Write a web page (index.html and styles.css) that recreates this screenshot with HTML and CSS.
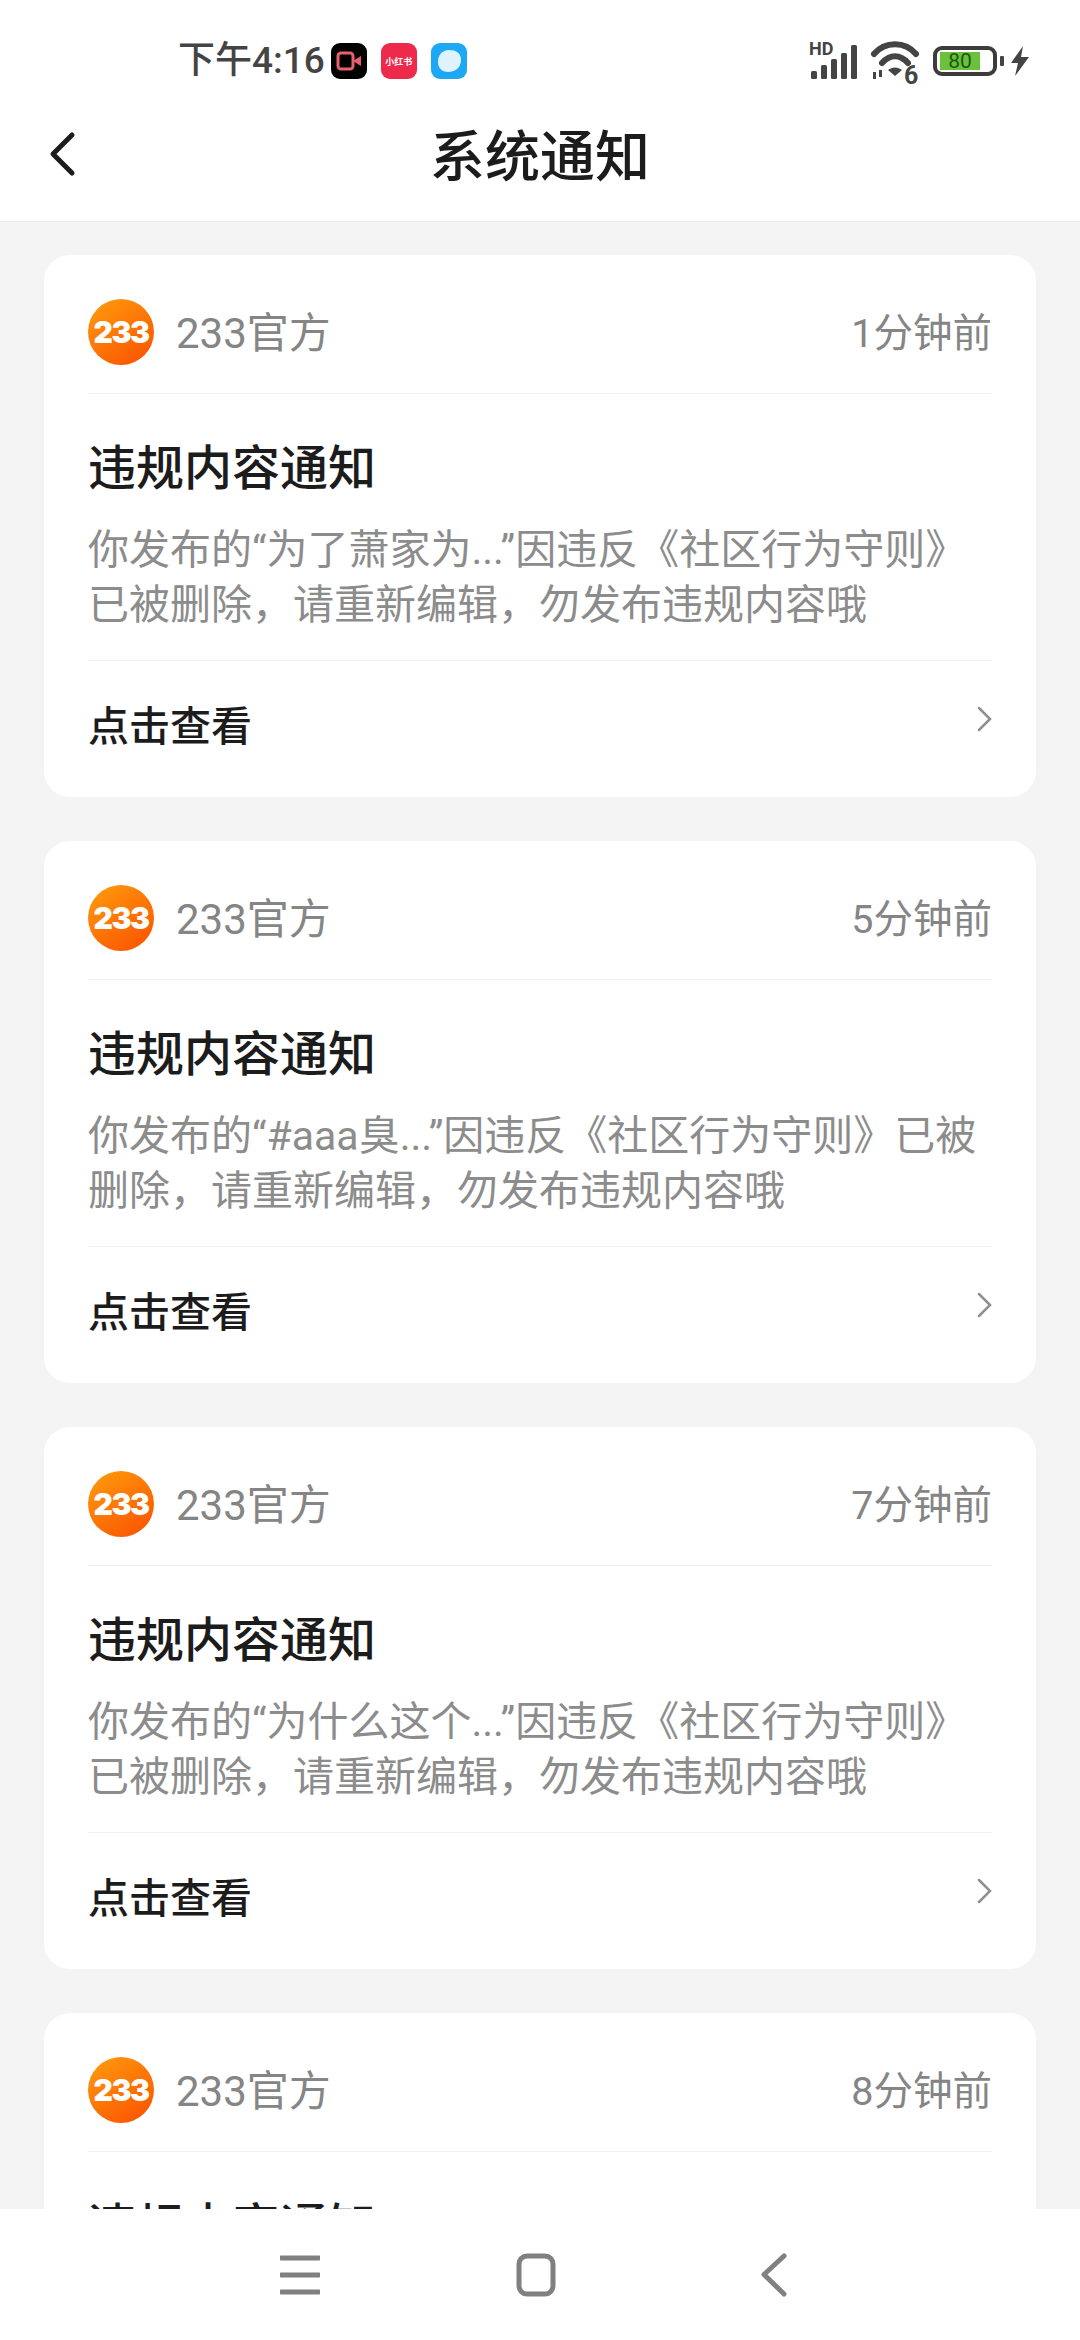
FILE: index.html
```html
<!DOCTYPE html>
<html lang="zh-CN">
<head>
<meta charset="utf-8">
<title>系统通知</title>
<link rel="stylesheet" href="styles.css">
</head>
<body>
<div class="page">
  <header class="top">
    <div class="status">
      <div class="status-left">
        <span class="clock">下午4:16</span>
        <span class="app app-video"><svg viewBox="0 0 34 34" width="34" height="34"><rect x="6" y="9" width="15" height="16" rx="3" fill="none" stroke="#e8606e" stroke-width="3"/><path d="M21 17l8-5v10z" fill="#e8606e"/></svg></span>
        <span class="app app-red">小红书</span>
        <span class="app app-blue"><svg viewBox="0 0 34 34" width="34" height="34"><path d="M17 6c7 0 12 3 12 10 0 8-6 12-13 12-6 0-10-4-10-10C6 11 10 6 17 6z" fill="#dff3fe"/></svg></span>
      </div>
      <div class="status-right">
        <svg class="sig" viewBox="0 0 50 44" width="50" height="44">
          <text x="0" y="16" class="hd">HD</text>
          <rect x="2" y="32" width="6" height="8" rx="1.500" fill="#444"/>
          <rect x="12" y="26" width="6" height="14" rx="1.500" fill="#444"/>
          <rect x="22" y="20" width="6" height="20" rx="1.500" fill="#444"/>
          <rect x="32" y="14" width="6" height="26" rx="1.500" fill="#444"/>
          <rect x="42" y="6" width="6" height="34" rx="1.500" fill="#444"/>
        </svg>
        <svg class="wifi" viewBox="0 0 48 44" width="48" height="44">
          <path d="M3 15C14 2 34 2 45 15" fill="none" stroke="#444" stroke-width="6" stroke-linecap="round"/>
          <path d="M11 24C19 15 29 15 37 24" fill="none" stroke="#444" stroke-width="6" stroke-linecap="round"/>
          <path d="M17 31c4-3.500 10-3.500 14 0l-7 6z" fill="#444"/>
          <path d="M2 33h3v7H2zM8 31h3v7H8z" fill="#444"/>
          <text x="33" y="45" class="six">6</text>
        </svg>
        <span class="battery"><span class="level">80</span></span>
        <span class="batt-cap"></span>
        <svg class="bolt" viewBox="0 0 20 32" width="20" height="32"><path d="M13 1L1 18h7L5 31l14-19h-8z" fill="#444"/></svg>
      </div>
    </div>
    <div class="titlebar">
      <svg class="back" viewBox="0 0 30 48" width="30" height="48"><path d="M24 4L5 23l19 19" fill="none" stroke="#1c1c1c" stroke-width="5" stroke-linecap="round" stroke-linejoin="round"/></svg>
      <h1 class="title">系统通知</h1>
    </div>
  </header>

  <main class="list">
    <article class="card">
      <div class="head">
        <span class="logo">233</span><span class="sender">233官方</span><span class="time">1分钟前</span>
      </div>
      <div class="body">
        <h2 class="subject">违规内容通知</h2>
        <p class="msg">你发布的“为了萧家为...”因违反《社区行为守则》已被删除，请重新编辑，勿发布违规内容哦</p>
      </div>
      <div class="foot">
        <span class="link">点击查看</span>
        <svg class="chev" viewBox="0 0 16 26" width="16" height="26"><path d="M3 2l11 11L3 24" fill="none" stroke="#8f8f8f" stroke-width="2.500" stroke-linecap="round"/></svg>
      </div>
    </article>
    <article class="card">
      <div class="head">
        <span class="logo">233</span><span class="sender">233官方</span><span class="time">5分钟前</span>
      </div>
      <div class="body">
        <h2 class="subject">违规内容通知</h2>
        <p class="msg">你发布的“#aaa臭...”因违反《社区行为守则》已被删除，请重新编辑，勿发布违规内容哦</p>
      </div>
      <div class="foot">
        <span class="link">点击查看</span>
        <svg class="chev" viewBox="0 0 16 26" width="16" height="26"><path d="M3 2l11 11L3 24" fill="none" stroke="#8f8f8f" stroke-width="2.500" stroke-linecap="round"/></svg>
      </div>
    </article>
    <article class="card">
      <div class="head">
        <span class="logo">233</span><span class="sender">233官方</span><span class="time">7分钟前</span>
      </div>
      <div class="body">
        <h2 class="subject">违规内容通知</h2>
        <p class="msg">你发布的“为什么这个...”因违反《社区行为守则》已被删除，请重新编辑，勿发布违规内容哦</p>
      </div>
      <div class="foot">
        <span class="link">点击查看</span>
        <svg class="chev" viewBox="0 0 16 26" width="16" height="26"><path d="M3 2l11 11L3 24" fill="none" stroke="#8f8f8f" stroke-width="2.500" stroke-linecap="round"/></svg>
      </div>
    </article>
    <article class="card">
      <div class="head">
        <span class="logo">233</span><span class="sender">233官方</span><span class="time">8分钟前</span>
      </div>
      <div class="body">
        <h2 class="subject">违规内容通知</h2>
      </div>
    </article>
  </main>

  <nav class="navbar">
    <svg viewBox="0 0 40 40" width="40" height="40"><path d="M1 3h38M1 20h38M1 37h38" fill="none" stroke="#808080" stroke-width="5" stroke-linecap="round"/></svg>
    <svg viewBox="0 0 40 44" width="40" height="44"><rect x="3" y="3" width="34" height="38" rx="8" fill="none" stroke="#808080" stroke-width="5"/></svg>
    <svg class="nav-back" viewBox="0 0 28 44" width="28" height="44"><path d="M24 3L4 21.500 24 41" fill="none" stroke="#808080" stroke-width="5" stroke-linecap="round" stroke-linejoin="round"/></svg>
  </nav>
</div>
</body>
</html>
```
FILE: styles.css
```css
* { box-sizing: border-box; }
html, body { margin: 0; padding: 0; }
body {
  font-family: "Noto Sans CJK SC", "Noto Sans", sans-serif;
  background: #f4f4f4;
}
.page {
  width: 1080px;
  height: 2340px;
  display: flex;
  flex-direction: column;
  overflow: hidden;
}
.top {
  flex: none;
  height: 222px;
  background: #fff;
  border-bottom: 1px solid #ececec;
}
.status {
  height: 92px;
  padding: 30px 50px 0 178px;
  display: flex;
  justify-content: space-between;
  align-items: center;
}
.status-left { display: flex; align-items: center; }
.clock {
  font-family: Roboto, "Noto Sans CJK SC", sans-serif;
  font-size: 37px;
  font-weight: 500;
  color: #444;
  margin-right: 6px;
  line-height: 44px;
}
.app {
  width: 36px;
  height: 36px;
  border-radius: 9px;
  margin-right: 14px;
  display: flex;
  align-items: center;
  justify-content: center;
  overflow: hidden;
}
.app-video { background: #000; }
.app-red {
  background: #ee2a4c;
  color: #fff;
  font-size: 9px;
  font-weight: 700;
  white-space: nowrap;
}
.app-blue { background: #1ea7f5; margin-right: 0; }
.status-right { display: flex; align-items: center; }
.sig { margin-right: 12px; overflow: visible; }
.hd { font: 700 18px Roboto, sans-serif; fill: #444; }
.six { font: 700 25px Roboto, sans-serif; fill: #444; }
.wifi { margin-right: 14px; overflow: visible; }
.battery {
  width: 64px;
  height: 30px;
  border: 4px solid #3c3c3c;
  border-radius: 9px;
  padding: 2px 3px;
  display: flex;
}
.level {
  width: 40px;
  background: #6cc13c;
  color: #1a5a10;
  font: 400 21px/18px Roboto, sans-serif;
  text-align: center;
}
.batt-cap {
  width: 4px;
  height: 10px;
  margin: 0 6px 0 3px;
  background: #444;
  border-radius: 1px;
}
.titlebar {
  height: 129px;
  padding: 0 0 4px 48px;
  display: flex;
  align-items: center;
  position: relative;
}
.back { flex: none; }
.title {
  position: absolute;
  left: 0;
  right: 0;
  top: 0;
  margin: 0;
  height: 121px;
  line-height: 121px;
  text-align: center;
  font-size: 55px;
  font-weight: 500;
  color: #1c1c1c;
}
.list {
  flex: 1;
  min-height: 0;
  overflow: hidden;
  padding: 33px 44px 0;
  display: flex;
  flex-direction: column;
  gap: 44px;
}
.card {
  flex: none;
  height: 542px;
  background: #fff;
  border-radius: 26px;
  padding: 0 44px;
}
.head {
  height: 139px;
  padding-top: 15px;
  border-bottom: 1px solid #f0f0f0;
  display: flex;
  align-items: center;
}
.logo {
  width: 66px;
  height: 66px;
  border-radius: 50%;
  background: linear-gradient(145deg, #ff9a0c 5%, #fb5a02 85%);
  color: #fff;
  font: 900 30px/66px Inter, Roboto, sans-serif;
  letter-spacing: -1.500px;
  text-align: center;
  flex: none;
  margin-right: 22px;
}
.sender {
  flex: 1;
  padding-bottom: 4px;
  font-family: Roboto, "Noto Sans CJK SC", sans-serif;
  font-size: 42px;
  color: #858585;
}
.time {
  padding-bottom: 4px;
  font-family: Roboto, "Noto Sans CJK SC", sans-serif;
  font-size: 39.500px;
  color: #858585;
}
.body {
  height: 267px;
  padding-top: 40px;
  border-bottom: 1px solid #f0f0f0;
}
.subject {
  margin: 0;
  font-size: 48px;
  line-height: 60px;
  font-weight: 500;
  color: #1c1c1c;
}
.msg {
  margin: 29px 0 0;
  font-family: Roboto, "Noto Sans CJK SC", sans-serif;
  font-size: 41px;
  line-height: 55px;
  color: #8c8c8c;
}
.foot {
  height: 123px;
  display: flex;
  align-items: center;
  justify-content: space-between;
}
.link {
  font-size: 41px;
  font-weight: 500;
  color: #1c1c1c;
}
.chev { flex: none; margin-top: -8px; }
.navbar {
  flex: none;
  height: 131px;
  background: #fff;
  display: flex;
  align-items: center;
  padding: 0 0 0 280px;
  gap: 196px;
}
.nav-back { margin-left: 8px; }
```
